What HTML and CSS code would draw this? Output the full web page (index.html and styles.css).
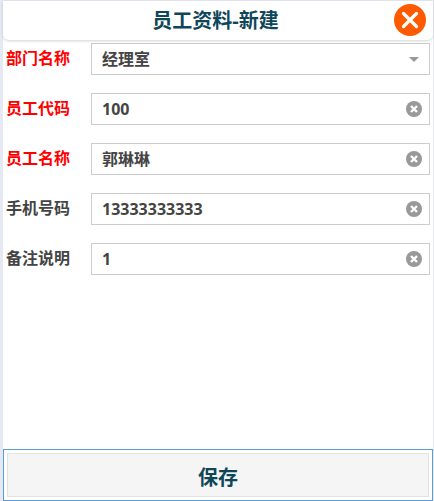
FILE: index.html
```html
<!DOCTYPE html>
<html lang="zh">
<head>
<meta charset="utf-8">
<title>员工资料-新建</title>
<link rel="stylesheet" href="styles.css">
</head>
<body>
<div class="app">
  <header class="header">
    <h1 class="title">员工资料-新建</h1>
    <button class="close" type="button" aria-label="关闭">
      <svg viewBox="0 0 32 32" width="32" height="32"><circle cx="16" cy="16" r="16" fill="#ff5a00"/><path d="M9.500 9.500l13 13M22.500 9.500l-13 13" stroke="#fff" stroke-width="3.200" stroke-linecap="round"/></svg>
    </button>
  </header>
  <main class="form">
    <div class="row">
      <label class="label req">部门名称</label>
      <div class="field"><span class="value">经理室</span><span class="caret"></span></div>
    </div>
    <div class="row">
      <label class="label req">员工代码</label>
      <div class="field"><span class="value">100</span><svg class="clear" viewBox="0 0 16 16" width="16" height="16"><circle cx="8" cy="8" r="8" fill="#999"/><path d="M5 5l6 6M11 5l-6 6" stroke="#fff" stroke-width="2.400"/></svg></div>
    </div>
    <div class="row">
      <label class="label req">员工名称</label>
      <div class="field"><span class="value">郭琳琳</span><svg class="clear" viewBox="0 0 16 16" width="16" height="16"><circle cx="8" cy="8" r="8" fill="#999"/><path d="M5 5l6 6M11 5l-6 6" stroke="#fff" stroke-width="2.400"/></svg></div>
    </div>
    <div class="row">
      <label class="label">手机号码</label>
      <div class="field"><span class="value">13333333333</span><svg class="clear" viewBox="0 0 16 16" width="16" height="16"><circle cx="8" cy="8" r="8" fill="#999"/><path d="M5 5l6 6M11 5l-6 6" stroke="#fff" stroke-width="2.400"/></svg></div>
    </div>
    <div class="row">
      <label class="label">备注说明</label>
      <div class="field"><span class="value">1</span><svg class="clear" viewBox="0 0 16 16" width="16" height="16"><circle cx="8" cy="8" r="8" fill="#999"/><path d="M5 5l6 6M11 5l-6 6" stroke="#fff" stroke-width="2.400"/></svg></div>
    </div>
  </main>
  <footer class="footer">
    <button class="save" type="button">保存</button>
  </footer>
</div>
</body>
</html>
```
FILE: styles.css
```css
* { box-sizing: border-box; }
html, body { margin: 0; height: 100%; }
body {
  background: #e6e9f3;
  font-family: "Open Sans", "Noto Sans CJK SC", sans-serif;
  overflow: hidden;
}
.app {
  height: 501px;
  width: 430px;
  margin-left: 3px;
  padding-top: 1px;
  background: #fff;
  display: flex;
  flex-direction: column;
  background-clip: content-box;
}
.header {
  height: 39px;
  flex: none;
  background: #fff;
  border-radius: 0 0 6px 6px;
  box-shadow: 0 1px 3px rgba(0,0,0,.18);
  display: flex;
  align-items: center;
  justify-content: center;
  padding-right: 5px;
  position: relative;
}
.title {
  margin: 0;
  font-size: 20px;
  line-height: 36px;
  font-weight: 700;
  color: #0f4659;
}
.close {
  position: absolute;
  right: 7px;
  top: 3px;
  width: 32px;
  height: 32px;
  padding: 0;
  border: 0;
  background: none;
  display: block;
}
.close svg { display: block; }
.form {
  flex: 1;
  display: flex;
  flex-direction: column;
  gap: 18px;
  padding: 3px 3px 0 3px;
}
.row {
  display: flex;
  align-items: center;
  height: 32px;
}
.label {
  width: 85px;
  flex: none;
  font-size: 16px;
  line-height: 30px;
  margin-bottom: 2px;
  font-weight: 700;
  color: #444;
}
.label.req { color: #f00; }
.field {
  flex: 1;
  height: 32px;
  border: 1px solid #ccc;
  background: #fff;
  display: flex;
  align-items: center;
  justify-content: space-between;
  padding: 0 7px 0 10px;
}
.value {
  font-size: 16px;
  line-height: 30px;
  font-weight: 700;
  color: #444;
}
.caret {
  width: 0;
  height: 0;
  border-left: 5px solid transparent;
  border-right: 5px solid transparent;
  border-top: 5px solid #999;
  margin-right: 3px;
}
.clear { display: block; }
.footer {
  flex: none;
  height: 52px;
  border: 1px solid #5b9dd9;
  padding: 3px;
}
.save {
  display: block;
  width: 100%;
  height: 100%;
  border: 1px solid #e2e2e2;
  background: #f5f5f5;
  font: 700 20px/30px "Open Sans", "Noto Sans CJK SC", sans-serif;
  color: #0f4659;
  padding: 5px 0 0;
}
```
